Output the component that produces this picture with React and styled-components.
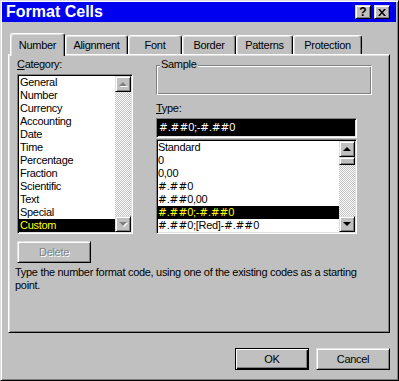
import React from 'react';
import styled, { createGlobalStyle, css } from 'styled-components';

const GlobalStyle = createGlobalStyle`
  html, body {
    margin: 0;
    padding: 0;
    background: #c0c0c0;
  }
  body {
    font-family: "Liberation Sans", Arial, sans-serif;
    font-size: 11px;
    letter-spacing: -0.3px;
    color: #000;
  }
`;

const raised = css`
  border: 1px solid;
  border-color: #dfdfdf #000 #000 #dfdfdf;
  box-shadow: inset 1px 1px #fff, inset -1px -1px #808080;
`;

const sunken = css`
  border: 1px solid;
  border-color: #808080 #fff #fff #808080;
  box-shadow: inset 1px 1px #000, inset -1px -1px #dfdfdf;
`;

const Window = styled.div`
  width: 399px;
  height: 381px;
  box-sizing: border-box;
  padding: 1px 2px 1px 1px;
  background: #c0c0c0;
  border: 1px solid;
  border-color: #dfdfdf #000 #000 #dfdfdf;
  box-shadow: inset 1px 1px #fff, inset -1px -1px #808080;
  display: flex;
  flex-direction: column;
`;

const TitleBar = styled.div`
  height: 20px;
  background: #0000f0;
  display: flex;
  align-items: center;
  padding: 0 6px 0 4px;
`;

const Title = styled.div`
  flex: 1;
  color: #fff;
  font-size: 16px;
  font-weight: bold;
  letter-spacing: 0;
`;

const TitleButtons = styled.div`
  display: flex;
  gap: 3px;
`;

const TitleButton = styled.div`
  ${raised};
  width: 16px;
  height: 14px;
  box-sizing: border-box;
  background: #c0c0c0;
  display: flex;
  align-items: center;
  justify-content: center;
  font-weight: bold;
  font-size: 12px;
  letter-spacing: 0;
  line-height: 12px;
`;

const Body = styled.div`
  flex: 1;
  padding: 11px 6px 0 6px;
  display: flex;
  flex-direction: column;
`;

const TabRow = styled.div`
  display: flex;
  align-items: flex-end;
  height: 21px;
  padding-left: 2px;
`;

const Tab = styled.div`
  width: ${p => p.$w}px;
  box-sizing: border-box;
  height: ${p => (p.$active ? 23 : 19)}px;
  margin-bottom: ${p => (p.$active ? -2 : 0)}px;
  padding-top: ${p => (p.$active ? 5 : 3)}px;
  position: relative;
  z-index: ${p => (p.$active ? 1 : 0)};
  background: #c0c0c0;
  border: 1px solid;
  border-bottom: none;
  border-color: #fff #000 #000 #fff;
  border-radius: 3px 3px 0 0;
  box-shadow: inset -1px 0 #808080, inset 1px 1px #dfdfdf;
  text-align: center;
  line-height: 13px;
`;

const Panel = styled.div`
  height: 279px;
  box-sizing: border-box;
  border: 1px solid;
  border-color: #fff #000 #000 #fff;
  box-shadow: inset 1px 1px #dfdfdf, inset -1px -1px #808080;
  padding: 3px 0 0 6px;
`;

const Columns = styled.div`
  display: flex;
  gap: 23px;
  padding-left: 2px;
`;

const Column = styled.div`
  width: ${p => p.$w}px;
  display: flex;
  flex-direction: column;
`;

const FieldLabel = styled.div`
  line-height: 13px;
  margin-top: ${p => p.$mt || 0}px;
`;

const ListBox = styled.div`
  ${sunken};
  margin-top: ${p => p.$mt}px;
  width: ${p => (p.$w ? `${p.$w}px` : 'auto')};
  height: ${p => p.$h}px;
  box-sizing: border-box;
  padding: 1px;
  background: #fff;
  display: flex;
`;

const Items = styled.div`
  flex: 1;
  display: flex;
  flex-direction: column;
  overflow: hidden;
`;

const Item = styled.div`
  height: 13px;
  line-height: 13px;
  padding-left: ${p => p.$pl}px;
  white-space: nowrap;
  background: ${p => (p.$selected ? '#000' : 'transparent')};
  color: ${p => (p.$selected ? '#ffff00' : '#000')};
`;

const Hash = styled.span`
  font-family: "DejaVu Sans", "Liberation Sans", sans-serif;
  font-size: 10.5px;
  letter-spacing: 0;
`;

const ScrollBar = styled.div`
  width: 16px;
  display: flex;
  flex-direction: column;
  background-image: repeating-conic-gradient(#fff 0 25%, #c0c0c0 0 50%);
  background-size: 2px 2px;
`;

const ScrollButton = styled.div`
  ${raised};
  width: 16px;
  height: 16px;
  box-sizing: border-box;
  background: #c0c0c0;
  display: flex;
  align-items: center;
  justify-content: center;
`;

const Thumb = styled.div`
  ${raised};
  height: 8px;
  box-sizing: border-box;
  background: #c0c0c0;
`;

const Spacer = styled.div`
  flex: 1;
`;

const Arrow = styled.span`
  width: 0;
  height: 0;
  border-left: 4px solid transparent;
  border-right: 4px solid transparent;
  ${p => (p.$dir === 'up'
    ? css`border-bottom: 4px solid ${p.$disabled ? '#808080' : '#000'};`
    : css`border-top: 4px solid ${p.$disabled ? '#808080' : '#000'};`)}
  filter: ${p => (p.$disabled ? 'drop-shadow(1px 1px 0 #fff)' : 'none')};
`;

const Button = styled.div`
  ${raised};
  width: 74px;
  height: 22px;
  box-sizing: border-box;
  display: flex;
  align-items: center;
  justify-content: center;
  background: #c0c0c0;
  color: ${p => (p.$disabled ? '#808080' : '#000')};
  text-shadow: ${p => (p.$disabled ? '1px 1px 0 #fff' : 'none')};
  margin-top: ${p => p.$mt || 0}px;
  ${p => p.$default && css`
    border: 1px solid #000;
    box-shadow: inset 1px 1px #fff, inset -1px -1px #000, inset -2px -2px #808080;
  `}
`;

const Description = styled.p`
  margin: 3px 0 0 0;
  padding-right: 8px;
  line-height: 13px;
`;

const GroupBox = styled.div`
  margin-top: 7px;
  height: 30px;
  box-sizing: border-box;
  border: 1px solid;
  border-color: #808080 #fff #fff #808080;
  box-shadow: inset 1px 1px #fff, inset -1px -1px #808080;
`;

const Legend = styled.div`
  width: fit-content;
  margin: -8px 0 0 3px;
  padding: 0 1px;
  background: #c0c0c0;
  line-height: 13px;
`;

const TypeInput = styled.div`
  ${sunken};
  margin-top: 3px;
  width: 201px;
  height: 20px;
  box-sizing: border-box;
  padding: 2px 0 0 2px;
  background: #000;
  color: #fff;
  line-height: 13px;
`;

const Footer = styled.div`
  display: flex;
  justify-content: flex-end;
  gap: 7px;
  padding-top: 15px;
`;

const categories = [
  'General', 'Number', 'Currency', 'Accounting', 'Date', 'Time',
  'Percentage', 'Fraction', 'Scientific', 'Text', 'Special', 'Custom',
];

const types = [
  'Standard', '0', '0,00', '#.##0', '#.##0,00', '#.##0;-#.##0', '#.##0;[Red]-#.##0',
];

const tabs = [
  ['Number', 55], ['Alignment', 63], ['Font', 54], ['Border', 54],
  ['Patterns', 57], ['Protection', 69],
];

// the dialog font draws '#' much wider than Arial does
const Code = ({ text }) => (
  <>
    {text.split(/(#)/).map((part, i) => (part === '#' ? <Hash key={i}>#</Hash> : part))}
  </>
);

export default function App() {
  return (
    <>
      <GlobalStyle />
      <Window>
        <TitleBar>
          <Title>Format Cells</Title>
          <TitleButtons>
            <TitleButton>?</TitleButton>
            <TitleButton>
              <svg width="8" height="7" viewBox="0 0 8 7">
                <path d="M0 0h2l2 2.5L6 0h2L5 3.5 8 7H6L4 4.5 2 7H0l3-3.5z" fill="#000" />
              </svg>
            </TitleButton>
          </TitleButtons>
        </TitleBar>
        <Body>
          <TabRow>
            {tabs.map(([label, w], i) => (
              <Tab key={label} $w={w} $active={i === 0}>{label}</Tab>
            ))}
          </TabRow>
          <Panel>
            <Columns>
              <Column $w={116}>
                <FieldLabel $mt={0}><u>C</u>ategory:</FieldLabel>
                <ListBox $mt={3} $h={160}>
                  <Items>
                    {categories.map(c => (
                      <Item key={c} $pl={1} $selected={c === 'Custom'}>{c}</Item>
                    ))}
                  </Items>
                  <ScrollBar>
                    <ScrollButton><Arrow $dir="up" $disabled /></ScrollButton>
                    <Spacer />
                    <ScrollButton><Arrow $dir="down" $disabled /></ScrollButton>
                  </ScrollBar>
                </ListBox>
                <Button $disabled $mt={7}>Delete</Button>
              </Column>
              <Column $w={216}>
                <GroupBox>
                  <Legend>Sample</Legend>
                </GroupBox>
                <FieldLabel $mt={7}><u>T</u>ype:</FieldLabel>
                <TypeInput><Code text="#.##0;-#.##0" /></TypeInput>
                <ListBox $mt={1} $h={95} $w={201}>
                  <Items>
                    {types.map(t => (
                      <Item key={t} $pl={0} $selected={t === '#.##0;-#.##0'}><Code text={t} /></Item>
                    ))}
                  </Items>
                  <ScrollBar>
                    <ScrollButton><Arrow $dir="up" /></ScrollButton>
                    <Thumb />
                    <Spacer />
                    <ScrollButton><Arrow $dir="down" /></ScrollButton>
                  </ScrollBar>
                </ListBox>
              </Column>
            </Columns>
            <Description>
              Type the number format code, using one of the existing codes as a starting point.
            </Description>
          </Panel>
          <Footer>
            <Button $default>OK</Button>
            <Button>Cancel</Button>
          </Footer>
        </Body>
      </Window>
    </>
  );
}
